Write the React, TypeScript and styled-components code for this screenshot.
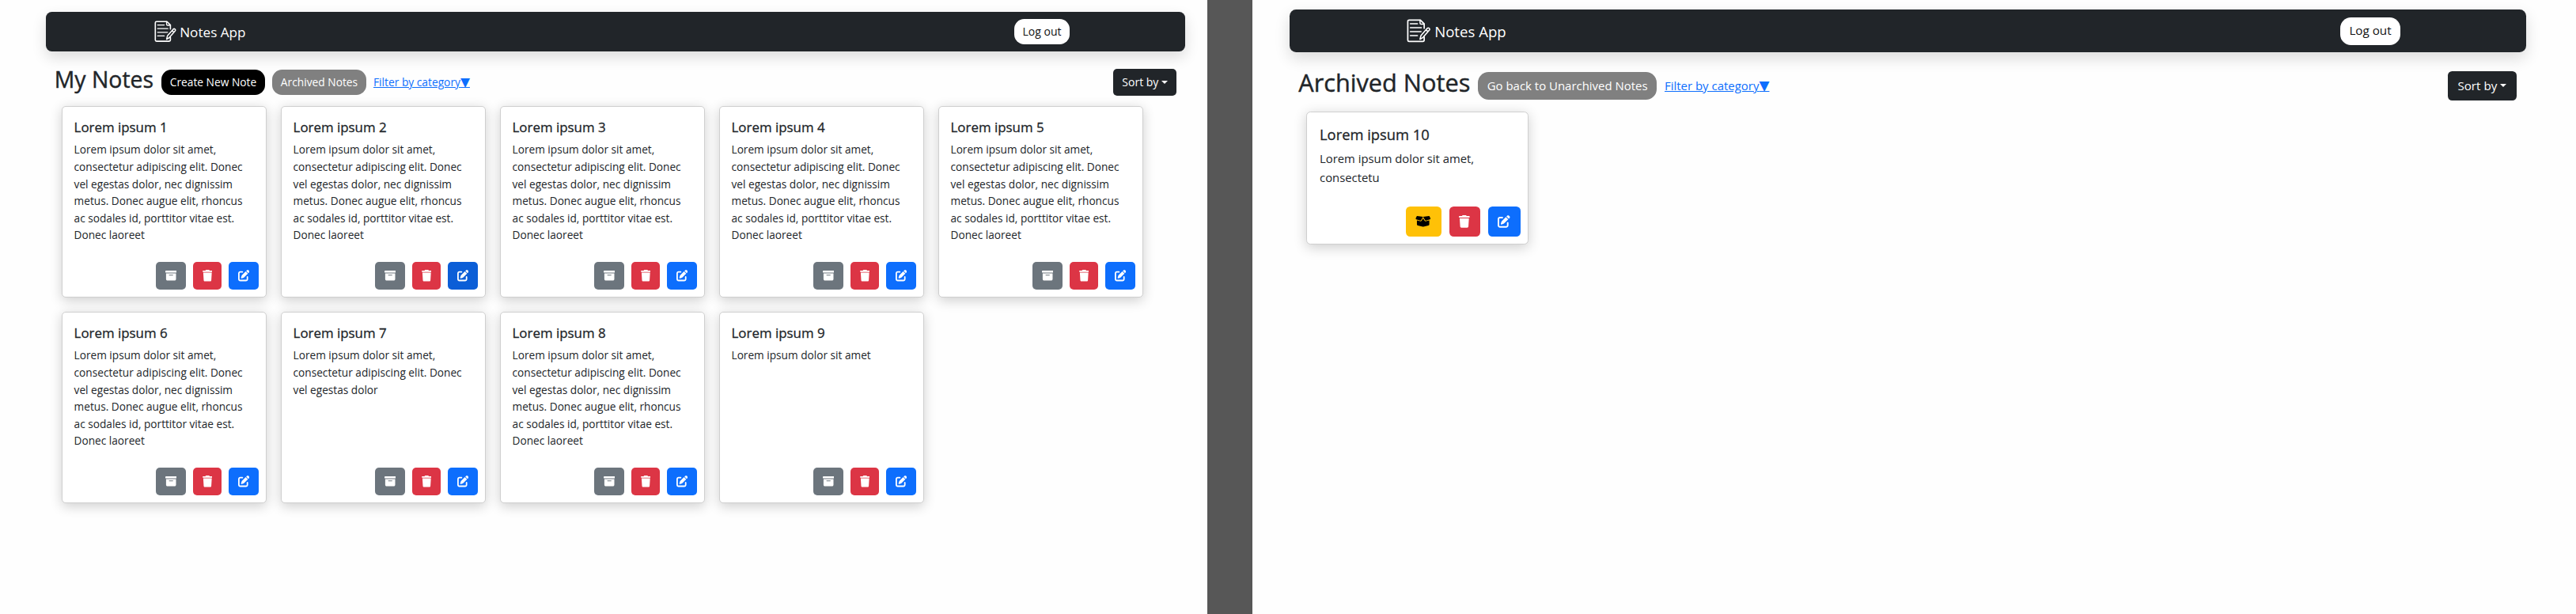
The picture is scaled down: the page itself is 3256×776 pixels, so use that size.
import React from 'react';
import styled, { createGlobalStyle, ThemeProvider, css } from 'styled-components';
import { FaBoxArchive, FaBoxOpen, FaPenToSquare, FaTrash } from 'react-icons/fa6';

interface PanelTheme {
  scale: number;
}

/* Every length follows the zoom level of the panel it belongs to. */
const u =
  (n: number) =>
  ({ theme }: { theme: any }) =>
    `${+(n * (theme as PanelTheme).scale).toFixed(2)}px`;

const GlobalStyle = createGlobalStyle`
  * { box-sizing: border-box; }
  body {
    margin: 0;
    background: #fff;
    color: #212529;
    font-family: "Open Sans", "Noto Sans", sans-serif;
  }
  button { font-family: inherit; cursor: pointer; }
`;

const Screen = styled.div`
  display: grid;
  grid-template-columns: 1526px 57px 1fr;
  height: 776px;
  overflow: hidden;
`;

const Divider = styled.div`
  background: #575757;
`;

const Page = styled.main<{ $padding: string }>`
  min-width: 0;
  padding: ${(p) => p.$padding};
  background: #fefefe;
`;

const Navbar = styled.nav`
  display: flex;
  align-items: center;
  justify-content: space-between;
  height: ${u(49.9)};
  padding: 0 ${u(146)} 0 ${u(136.6)};
  border-radius: ${u(7.5)};
  background: #212529;
  box-shadow: 0 ${u(7.2)} ${u(18)} rgba(0, 0, 0, 0.14);
`;

const Brand = styled.a`
  display: flex;
  align-items: center;
  gap: ${u(4.6)};
  color: #fff;
  font-size: ${u(17.15)};
  line-height: ${u(27)};
`;

const Logo = styled.svg`
  width: ${u(28)};
  height: ${u(28)};
  fill: none;
  stroke: #fff;
  stroke-linecap: round;
  stroke-linejoin: round;
`;

const BrandName = styled.span`
  padding-top: ${u(1.4)};
`;

const buttonBase = css`
  display: inline-flex;
  align-items: center;
  justify-content: center;
  padding: 0;
  border: 0;
  line-height: ${u(21.6)};
  white-space: nowrap;
`;

const LogoutButton = styled.button`
  ${buttonBase}
  width: ${u(70)};
  height: ${u(32.2)};
  border-radius: ${u(12.5)};
  background: #fff;
  color: #111;
  font-size: ${u(14)};
`;

const Toolbar = styled.header`
  display: flex;
  align-items: center;
  height: ${u(34)};
  margin: ${u(22)} ${u(10.8)} ${u(13.3)} ${u(10.8)};
`;

const Title = styled.h1<{ $size: number; $width: number }>`
  width: ${(p) => u(p.$width)(p)};
  margin: 0;
  padding-bottom: ${u(6.8)};
  font-size: ${(p) => u(p.$size)(p)};
  font-weight: 500;
  line-height: ${u(34.6)};
  white-space: nowrap;
  -webkit-text-stroke: 0.4px currentColor;
`;

const PillButton = styled.button<{ $tone: string; $width: number }>`
  ${buttonBase}
  width: ${(p) => u(p.$width)(p)};
  height: ${u(32.2)};
  margin-right: ${u(9)};
  border-radius: ${u(12.5)};
  background: ${(p) => p.$tone};
  color: #fff;
  font-size: ${u(13.78)};
`;

const FilterLink = styled.a`
  color: #0d6efd;
  font-size: ${u(13.78)};
  line-height: ${u(21.6)};
  text-decoration: underline;
  white-space: nowrap;
`;

const FilterArrow = styled.span`
  font-family: "DejaVu Sans", sans-serif;
  font-size: ${u(15.6)};
  line-height: 0;
`;

const SortButton = styled.button`
  ${buttonBase}
  gap: ${u(3.7)};
  width: ${u(80)};
  height: ${u(34)};
  margin-left: auto;
  border-radius: ${u(5)};
  background: #212529;
  color: #fff;
  font-size: ${u(14)};
`;

const Caret = styled.i`
  border: ${u(4.1)} solid transparent;
  border-top-color: currentColor;
  border-bottom: 0;
`;

const CardGrid = styled.section<{ $rowHeight: number }>`
  display: grid;
  grid-template-columns: repeat(5, ${u(258.6)});
  grid-auto-rows: ${(p) => u(p.$rowHeight)(p)};
  gap: ${u(18.5)} ${u(18.4)};
  margin-left: ${u(20.2)};
`;

const Card = styled.article`
  display: flex;
  flex-direction: column;
  padding: ${u(14.4)} ${u(8.6)} ${u(9)} ${u(14.4)};
  border: 1px solid #cfcfcf;
  border-radius: ${u(5)};
  background: #fff;
  box-shadow: 0 ${u(3.6)} ${u(14.4)} rgba(0, 0, 0, 0.19);
`;

const CardTitle = styled.h2`
  margin: 0 0 ${u(7.2)};
  font-size: ${u(16.9)};
  font-weight: 500;
  line-height: ${u(21.6)};
  -webkit-text-stroke: 0.3px currentColor;
`;

const CardText = styled.p`
  width: ${u(224)};
  margin: 0;
  font-size: ${u(13.66)};
  line-height: ${u(21.6)};
`;

const Actions = styled.footer`
  display: flex;
  justify-content: flex-end;
  gap: ${u(9)};
  margin-top: auto;
`;

const tones = {
  gray: '#6c757d',
  yellow: '#ffc107',
  red: '#dc3545',
  blue: '#0d6efd',
  blueHover: '#0b5ed7',
};

const ActionButton = styled.button<{ $tone: keyof typeof tones; $icon: number }>`
  ${buttonBase}
  width: ${(p) => u(p.$icon + 23.6)(p)};
  height: ${u(34.6)};
  border-radius: ${u(5)};
  background: ${(p) => tones[p.$tone]};
  color: ${(p) => (p.$tone === 'yellow' ? '#000' : '#fff')};

  svg {
    width: ${(p) => u(p.$icon)(p)};
    height: ${u(14.4)};
  }
`;

const Header = () => (
  <Navbar>
    <Brand>
      <Logo viewBox="0 0 28 28" aria-hidden="true">
        <path
          strokeWidth="1.6"
          d="M20.4 10.8V5.6L16 1.2H2.9Q1.3 1.2 1.3 2.8V24.5Q1.3 26.1 2.9 26.1H18.8Q20.4 26.1 20.4 24.5V21"
        />
        <path strokeWidth="1.4" d="M15.6 1.4V4.8Q15.6 6 16.8 6H20.2" />
        <path strokeWidth="1.3" d="M4.2 5.6H12.6M4.2 10.2H17.2M4.2 14.8H16.8M4.2 19.4H12.6" />
        <path
          strokeWidth="1.5"
          d="M15.6 23.6L16.6 19.3L24 10.9Q25 9.9 26.1 10.8Q27.2 11.8 26.4 12.9L19 21.5ZM22.6 12.7L24.8 14.7"
        />
      </Logo>
      <BrandName>Notes App</BrandName>
    </Brand>
    <LogoutButton>Log out</LogoutButton>
  </Navbar>
);

const CategoryFilter = () => (
  <FilterLink>
    Filter by category<FilterArrow>▼</FilterArrow>
  </FilterLink>
);

const SortMenu = () => (
  <SortButton>
    Sort by
    <Caret />
  </SortButton>
);

interface NoteProps {
  title: string;
  text: string;
  archived?: boolean;
  hovered?: boolean;
}

const Note = ({ title, text, archived, hovered }: NoteProps) => (
  <Card>
    <CardTitle>{title}</CardTitle>
    <CardText>{text}</CardText>
    <Actions>
      {archived ? (
        <ActionButton $tone="yellow" $icon={18} aria-label="Unarchive">
          <FaBoxOpen />
        </ActionButton>
      ) : (
        <ActionButton $tone="gray" $icon={14.4} aria-label="Archive">
          <FaBoxArchive />
        </ActionButton>
      )}
      <ActionButton $tone="red" $icon={12.6} aria-label="Delete">
        <FaTrash />
      </ActionButton>
      <ActionButton $tone={hovered ? 'blueHover' : 'blue'} $icon={14.4} aria-label="Edit">
        <FaPenToSquare />
      </ActionButton>
    </Actions>
  </Card>
);

const LONG =
  'Lorem ipsum dolor sit amet, consectetur adipiscing elit. Donec vel egestas dolor, nec dignissim metus. Donec augue elit, rhoncus ac sodales id, porttitor vitae est. Donec laoreet';

const notes = [
  LONG,
  LONG,
  LONG,
  LONG,
  LONG,
  LONG,
  'Lorem ipsum dolor sit amet, consectetur adipiscing elit. Donec vel egestas dolor',
  LONG,
  'Lorem ipsum dolor sit amet',
];

export default function App() {
  return (
    <Screen>
      <GlobalStyle />
      <ThemeProvider theme={{ scale: 1 }}>
        <Page $padding="15px 28px 0 58px">
          <Header />
          <Toolbar>
            <Title $size={28.4} $width={135.2}>
              My Notes
            </Title>
            <PillButton $tone="#000" $width={131}>
              Create New Note
            </PillButton>
            <PillButton $tone="#808080" $width={119}>
              Archived Notes
            </PillButton>
            <CategoryFilter />
            <SortMenu />
          </Toolbar>
          <CardGrid $rowHeight={241.5}>
            {notes.map((text, i) => (
              <Note key={i} title={`Lorem ipsum ${i + 1}`} text={text} hovered={i === 1} />
            ))}
          </CardGrid>
        </Page>
      </ThemeProvider>
      <Divider />
      <ThemeProvider theme={{ scale: 1.0856 }}>
        <Page $padding="12px 63.5px 0 46.5px">
          <Header />
          <Toolbar>
            <Title $size={28.3} $width={209}>
              Archived Notes
            </Title>
            <PillButton $tone="#808080" $width={208.3}>
              Go back to Unarchived Notes
            </PillButton>
            <CategoryFilter />
            <SortMenu />
          </Toolbar>
          <CardGrid $rowHeight={154.8}>
            <Note title="Lorem ipsum 10" text="Lorem ipsum dolor sit amet, consectetu" archived />
          </CardGrid>
        </Page>
      </ThemeProvider>
    </Screen>
  );
}
